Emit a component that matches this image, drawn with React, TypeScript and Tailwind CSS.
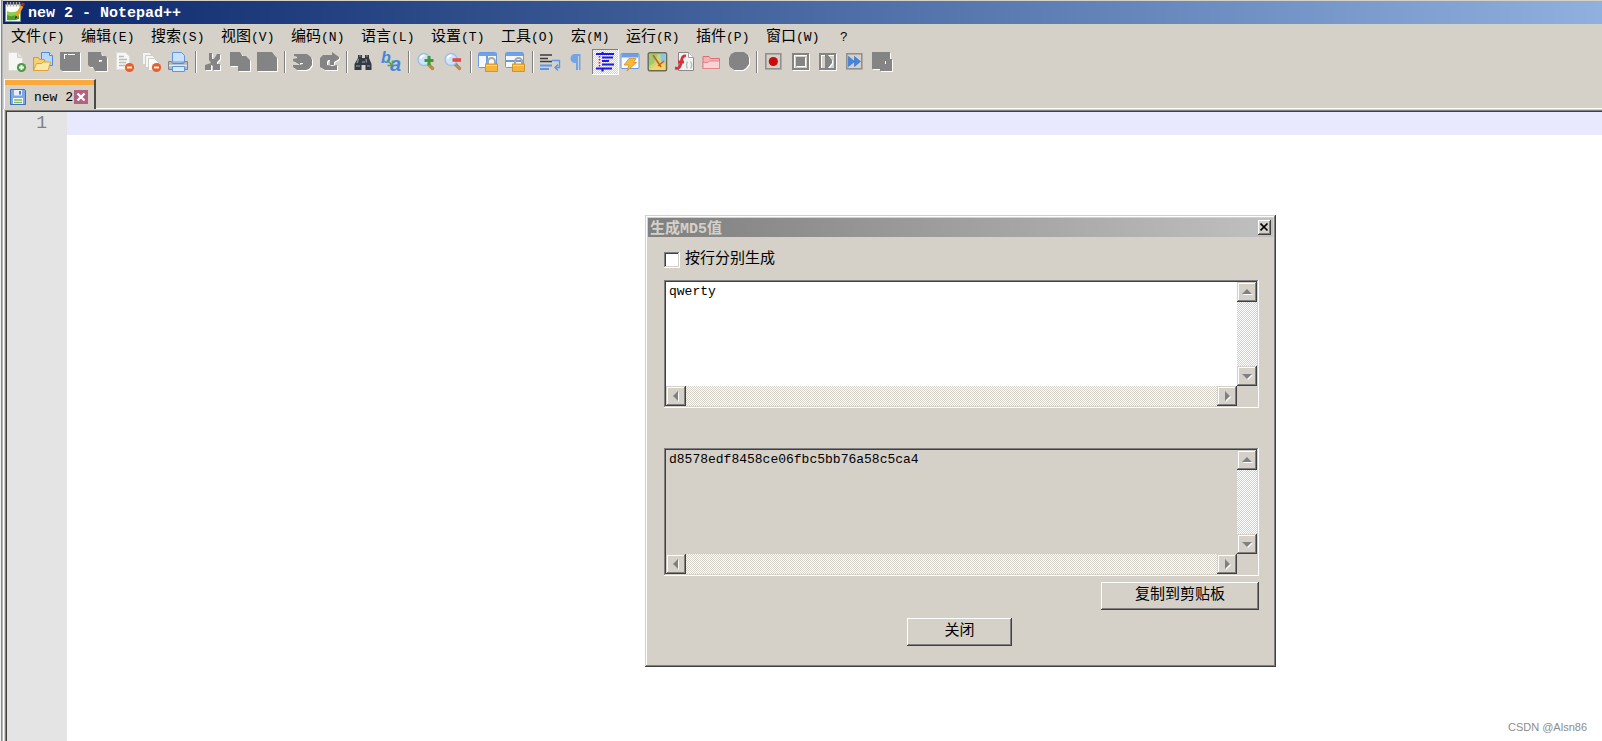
import { useState, type ReactNode } from "react";

const RAISED =
  "shadow-[inset_-1px_-1px_#404040,inset_1px_1px_#d5d1c8,inset_-2px_-2px_#808080,inset_2px_2px_#ffffff]";
const RAISED_BUTTON =
  "shadow-[inset_-1px_-1px_#404040,inset_1px_1px_#ffffff,inset_-2px_-2px_#808080]";
const SUNKEN =
  "shadow-[inset_-1px_-1px_#ffffff,inset_1px_1px_#808080,inset_-2px_-2px_#d5d1c8,inset_2px_2px_#404040]";
const CHECKER =
  "bg-[repeating-conic-gradient(#ffffff_0_25%,#d5d1c8_0_50%)] bg-[length:2px_2px]";
const MONO = "font-['Liberation_Mono','Noto_Sans_CJK_SC',monospace]";

const menus = [
  { name: "文件", key: "F", width: "w-[70px]" },
  { name: "编辑", key: "E", width: "w-[70px]" },
  { name: "搜索", key: "S", width: "w-[70px]" },
  { name: "视图", key: "V", width: "w-[70px]" },
  { name: "编码", key: "N", width: "w-[70px]" },
  { name: "语言", key: "L", width: "w-[70px]" },
  { name: "设置", key: "T", width: "w-[70px]" },
  { name: "工具", key: "O", width: "w-[70px]" },
  { name: "宏", key: "M", width: "w-[55px]" },
  { name: "运行", key: "R", width: "w-[70px]" },
  { name: "插件", key: "P", width: "w-[70px]" },
  { name: "窗口", key: "W", width: "w-[70px]" },
];

function Svg({ children }: { children: ReactNode }) {
  return (
    <svg viewBox="0 0 20 20" className="block h-5 w-5 shrink-0 overflow-visible" aria-hidden="true">
      {children}
    </svg>
  );
}

// 禁用状态：灰色剪影加右下白边
function Disabled({ d }: { d: string }) {
  return (
    <Svg>
      <path d={d} fill="#fff" fillRule="evenodd" transform="translate(1 1)" />
      <path d={d} fill="#848484" fillRule="evenodd" />
    </Svg>
  );
}

function Badge({ color, plus }: { color: string; plus?: boolean }) {
  return (
    <>
      <circle cx="14.500" cy="15.500" r="4.600" fill={color} />
      <path d={plus ? "M12 15.500h5M14.500 13v5" : "M12 15.500h5"} stroke="#fff" strokeWidth="1.800" />
    </>
  );
}

function FloppyIcon() {
  return (
    <svg viewBox="0 0 16 16" className="block h-4 w-4 shrink-0" aria-hidden="true">
      <path d="M.5.500h14l1 1v14h-15z" fill="#7aa9e8" stroke="#3f6fbd" />
      <path d="M4 1h8v5.500H4z" fill="#e6effa" />
      <path d="M9 2h2v3.500H9z" fill="#4a7cc4" />
      <path d="M3 9h10v6H3z" fill="#fff" />
      <path d="M4 11h8M4 13.500h8" stroke="#79b86a" strokeWidth="1.400" />
    </svg>
  );
}

function WindowLock({ split }: { split: "v" | "h" }) {
  return (
    <Svg>
      <rect x="-.5" y=".5" width="18" height="15" rx="1" fill="#f4f8fd" stroke="#6a9be0" />
      <path d="M0 1h17v3H0z" fill="#6ea2ea" />
      <path d={split === "v" ? "M8 4v11" : "M0 9h17"} stroke="#6a9be0" strokeWidth="2" />
      <path d="M9 12v-2.500a3.500 3.500 0 0 1 7 0V12" fill="none" stroke="#aaa79e" strokeWidth="2" />
      <rect x="6.500" y="12" width="12" height="7.500" fill="#f5b53c" stroke="#c98c20" strokeWidth=".8" />
      <path d="M7 13.500h11" stroke="#fbd98a" />
    </Svg>
  );
}

function Magnifier({ plus }: { plus?: boolean }) {
  return (
    <Svg>
      <path d="m11 12 4.500 4.500" stroke="#b98a4e" strokeWidth="3.400" strokeLinecap="round" />
      <path d="m11 11 2 2" stroke="#8b8b8b" strokeWidth="2" />
      <circle cx="7" cy="7.500" r="6" fill="#cfe3f8" stroke="#9dbfe6" strokeWidth="1.400" />
      <path d="M3.500 6.500a4 4 0 0 1 4-3" stroke="#fff" strokeWidth="2" fill="none" />
      {plus ? (
        <path d="M7.500 8.500h9M12 4v9" stroke="#3f9a35" strokeWidth="3" />
      ) : (
        <path d="M8.500 8h8.500" stroke="#e14b4b" strokeWidth="3.600" />
      )}
    </Svg>
  );
}

function MacroFrame({ children }: { children: ReactNode }) {
  return (
    <Svg>
      <rect x=".8" y="1.800" width="15" height="15" fill="#d5d1c8" stroke="#8f8f8f" strokeWidth="1.600" />
      {children}
    </Svg>
  );
}

type Tool = { label: string; icon: ReactNode; pressed?: boolean };

const toolGroups: Tool[][] = [
  [
    {
      label: "新建",
      icon: (
        <Svg>
          <path d="M1.500.500h9l5 5v13h-14z" fill="#f6f6f4" stroke="#dedcd8" />
          <path d="M10.500.500v5h5" fill="#e6e4e0" stroke="#d0cec8" />
          <Badge color="#4f9a48" plus />
        </Svg>
      ),
    },
    {
      label: "打开",
      icon: (
        <Svg>
          <path d="M7.500.500h8l3 3v10h-11z" fill="#b9d7f7" stroke="#4d8be0" />
          <path d="M15.500.500v3h3" fill="#e8f2fd" stroke="#4d8be0" />
          <path d="M-.5 18.500V5.500h5l1 2h5v11z" fill="#f7cf6c" stroke="#d79a2b" />
          <path d="M-.5 18.500l3-7h5l2-1.500h7l-2.500 8.500z" fill="#fbe7a6" stroke="#dba338" />
        </Svg>
      ),
    },
    {
      label: "保存",
      icon: <Disabled d="M-1 0H19V19H1L-1 17ZM3 2V7H4V3H6V2ZM7 2V3H14V2Z" />,
    },
    {
      label: "全部保存",
      icon: <Disabled d="M0 0H13L14 4H18L19 6V19H7L5 15H2L0 13ZM11 8V10H14V8Z" />,
    },
    {
      label: "关闭",
      icon: (
        <Svg>
          <path d="M1.500.500h9l4 4v13h-13z" fill="#f6f6f4" stroke="#dedcd8" />
          <path d="M4 4.500h5M4 7.500h8M4 10.500h7M4 13.500h6" stroke="#bdbbb6" strokeWidth="1.400" />
          <Badge color="#e2622a" />
        </Svg>
      ),
    },
    {
      label: "全部关闭",
      icon: (
        <Svg>
          <path d="M.5.500h7l3 3v9H.5z" fill="#f4f4f2" stroke="#cfcdc8" />
          <path d="M3.500 3.500h7l3 3v9h-10z" fill="#f6f6f4" stroke="#cfcdc8" />
          <path d="M6.500 6.500h6l4 4v8h-10z" fill="#fafaf9" stroke="#cfcdc8" />
          <Badge color="#e2622a" />
        </Svg>
      ),
    },
    {
      label: "打印",
      icon: (
        <Svg>
          <path d="M3.500 10V.500h9l3 3V10z" fill="#c9e1fa" stroke="#5c97e4" />
          <path d="M-.5 9.500h3l1 2h11l1-2h3v8h-19z" fill="#b3b6bd" stroke="#80848c" />
          <path d="M0 13.500h18" stroke="#e4e6ea" strokeWidth="1.500" />
          <path d="M3.500 14.500h12v5h-12z" fill="#d9eafc" stroke="#5c97e4" />
        </Svg>
      ),
    },
  ],
  [
    {
      label: "剪切",
      icon: <Disabled d="M5 1H8V7H10L13 2H16V7L13 10V12H16V18H9V14L7 13V18H1V13L4 12L7 11L5 8Z" />,
    },
    {
      label: "复制",
      icon: <Disabled d="M-1 0H9L11 3V4H15L19 8V19H7V14H-1Z" />,
    },
    {
      label: "粘贴",
      icon: <Disabled d="M-1 0H14L19 6V19H-1Z" />,
    },
  ],
  [
    {
      label: "撤销",
      icon: <Disabled d="M1 2H14L18 5L19 8V13L16 17L13 18H4L0 15V13H6L10 12V11H7V13L0 9V7L4 6V5L1 4Z" />,
    },
    {
      label: "重做",
      icon: <Disabled d="M12 0L19 5V7L14 10V13H10V8H8L7 10V13L12 14L17 13V18H5L0 15V6L3 3H12Z" />,
    },
  ],
  [
    {
      label: "查找",
      icon: (
        <Svg>
          <path d="M3 6V3h4v3h3V3h4v3l2.500 6v6h-6v-5h-4v5h-7v-6z" fill="#343a44" />
          <path d="M4 4h2M11 4h2M2 11l1.500-4M11.500 10.500l-.5-3.500" stroke="#8d98a8" strokeWidth="1.200" />
          <path d="M1 14h4M12 14h3" stroke="#76808e" strokeWidth="1.600" />
          <path d="M7 10h3" stroke="#9aa2ac" />
        </Svg>
      ),
    },
    {
      label: "替换",
      icon: (
        <Svg>
          <text x="-1" y="11" fontSize="16" fontWeight="700" fontStyle="italic" fontFamily="Liberation Sans, sans-serif" fill="#4386dc">b</text>
          <text x="8" y="19" fontSize="20" fontWeight="700" fontStyle="italic" fontFamily="Liberation Sans, sans-serif" fill="#4386dc">a</text>
          <path d="M5 8l5 5M10.500 8.500V13.500H5.500" fill="none" stroke="#55a05a" strokeWidth="1.600" />
        </Svg>
      ),
    },
  ],
  [
    { label: "放大", icon: <Magnifier plus /> },
    { label: "缩小", icon: <Magnifier /> },
  ],
  [
    { label: "垂直同步滚动", icon: <WindowLock split="v" /> },
    { label: "水平同步滚动", icon: <WindowLock split="h" /> },
  ],
  [
    {
      label: "自动换行",
      icon: (
        <Svg>
          <path d="M-1 3h12M-1 6.500h8M-1 9.500h12" stroke="#3d3d3d" strokeWidth="1.600" />
          <path d="M-1 13.500h12M-1 17h9" stroke="#5d96e6" strokeWidth="1.800" />
          <path d="M11 8.500h7.500v7H15M17 12.500l-3 3 3 3" fill="none" stroke="#5d96e6" strokeWidth="1.400" />
        </Svg>
      ),
    },
    {
      label: "显示所有字符",
      icon: (
        <Svg>
          <path d="M12.500 2H7a4.500 4.500 0 0 0 0 9h1v7h2V4h1v14h1.500z" fill="#6ea6ee" />
        </Svg>
      ),
    },
    {
      label: "显示缩进参考线",
      pressed: true,
      icon: (
        <Svg>
          <path d="M0 2h18M6 5.500h11M6 9h7M6 12.500h12M0 16.500h16M6.500 16v3.500M6.500 0v3" stroke="#1a1af0" strokeWidth="2.200" />
          <path d="M3.500 4v11" stroke="#e02020" strokeWidth="1.600" strokeDasharray="1.500 1.500" />
        </Svg>
      ),
    },
    {
      label: "用户自定义语言",
      icon: (
        <Svg>
          <rect x="-1" y="1.500" width="18" height="15" rx="1" fill="#f6f9fd" stroke="#6a97d8" />
          <path d="M-.5 2h17v3.500h-17z" fill="#6c9fe8" />
          <path d="M7 6.500h7l-2.500 4h3L5 19l2-6H2z" fill="#f7b93c" stroke="#d68f1f" strokeWidth=".8" />
        </Svg>
      ),
    },
    {
      label: "文档结构图",
      icon: (
        <Svg>
          <rect x="-.8" y=".8" width="18.400" height="18" rx="1.500" fill="#c8d878" stroke="#6b6a58" strokeWidth="1.400" />
          <path d="M0 2h9l-4 9-5 3z" fill="#9ecb6e" />
          <path d="M11 2h5v8l-4-1z" fill="#8fc3e4" />
          <path d="M0 18l9-7 7 2v5z" fill="#f1d862" />
          <path d="M4 3l8 12M15 9l-6 5" stroke="#d8552e" strokeWidth="1.600" />
        </Svg>
      ),
    },
    {
      label: "函数列表",
      icon: (
        <Svg>
          <path d="M2.500.500h10l5 5v13h-15z" fill="#f3f3f3" stroke="#8a8a8a" />
          <path d="M12.500.500v5h5" fill="#fff" stroke="#a0a0a0" />
          <path d="M10 4C5 3 6 9 4.500 13S2 16.500-1 16M2 10h6" fill="none" stroke="#d6303a" strokeWidth="2.800" />
          <path d="M11.500 9.500q-2 4 0 7M14.500 9.500q2.500 4 0 7" fill="none" stroke="#b9bcb4" strokeWidth="1.400" />
        </Svg>
      ),
    },
    {
      label: "文件夹工作区",
      icon: (
        <Svg>
          <path d="M0 16.500v-12h6l1.500 2h9v10z" fill="#f2b3b7" stroke="#da6d76" />
          <path d="M0 16.500v-6h5l1.500-1.500h10v7.500z" fill="#f8d3d5" stroke="#e0868d" />
        </Svg>
      ),
    },
    {
      label: "监视文件",
      icon: <Disabled d="M5 0H14L18 3L19 6V12L16 16L13 18H4L0 15L-1 12V6L1 2Z" />,
    },
  ],
  [
    {
      label: "开始录制",
      icon: (
        <MacroFrame>
          <circle cx="8.300" cy="9.500" r="4.600" fill="#cc0a0a" />
        </MacroFrame>
      ),
    },
    {
      label: "停止录制",
      icon: <Disabled d="M0 1H17V18H0ZM2 3V16H15V3ZM4 5H13V14H4Z" />,
    },
    {
      label: "播放",
      icon: <Disabled d="M0 1H17V18H0ZM2 3V16H15V3ZM6 3H9L13 8V11L9 16H6Z" />,
    },
    {
      label: "重复播放",
      icon: (
        <MacroFrame>
          <path d="M2.500 4.500l6 5-6 5zM8.500 4.500l6 5-6 5z" fill="#3f86e6" stroke="#2c68c4" strokeWidth=".6" />
        </MacroFrame>
      ),
    },
    {
      label: "保存宏",
      icon: <Disabled d="M-1 0H17V7H19V19H7V17H-1ZM12 9V12H13V9Z" />,
    },
  ],
];

function TitleBar() {
  return (
    <header className="flex h-[23px] items-center gap-[3px] bg-gradient-to-r from-[#0b2569] to-[#90b1de] pl-[2px]">
      <svg viewBox="0 0 20 21" className="h-[21px] w-5 shrink-0" aria-hidden="true">
        <path d="M.5 2.500h15v17H.5z" fill="#fdfdfb" stroke="#8a8a86" />
        <path d="M2 9q6 3 12-1v8q-5 3-12 1z" fill="#8ccf4e" />
        <path d="M2 13q6 3 12-2v6q-5 2-12 1z" fill="#4e9e2c" />
        <path d="M2.500 0v4.500M5.500 0v4.500M8.500 0v4.500M11.500 0v4.500M14.500 0v4.500" stroke="#a6a6a4" strokeWidth="1.400" />
        <path d="M17 4 11 15" stroke="#e6a423" strokeWidth="3.200" />
        <path d="m10.500 13.500-.5 3.500 2.800-2z" fill="#3b3020" />
        <path d="m18.500 1-1.200 2.600" stroke="#b22a2a" strokeWidth="3.200" />
      </svg>
      <h1 className={`${MONO} pt-[2px] text-[15px] leading-5 font-bold text-white`}>new 2 - Notepad++</h1>
    </header>
  );
}

function MenuBar() {
  return (
    <nav className={`${MONO} flex h-6 items-center pt-1 pl-2 text-[15px] leading-5 text-black`}>
      {menus.map(({ name, key, width }) => (
        <button key={key} type="button" className={`${width} text-left whitespace-nowrap`}>
          {name}
          <span className="text-[13px]">({key})</span>
        </button>
      ))}
      <button type="button" className="w-4 text-center text-[13px]">?</button>
    </nav>
  );
}

function ToolBar() {
  return (
    <div role="toolbar" className="flex h-[31px] items-start pt-px pl-px">
      {toolGroups.map((group, index) => (
        <div key={group[0].label} className="flex">
          {index > 0 && (
            <div className="w-2 pt-[2px] pl-[2px]">
              <div className="h-[22px] w-[2px] border-r border-l border-r-white border-l-[#808080]" />
            </div>
          )}
          {group.map(({ label, icon, pressed }) => (
            <button
              key={label}
              type="button"
              title={label}
              aria-pressed={pressed}
              className={
                pressed
                  ? `flex h-[26px] w-[27px] items-start pt-[3px] pl-1 ${CHECKER} shadow-[inset_-1px_-1px_#ffffff,inset_1px_1px_#808080]`
                  : "flex h-[26px] w-[27px] items-start pt-[3px] pl-[3px]"
              }
            >
              {icon}
            </button>
          ))}
        </div>
      ))}
    </div>
  );
}

function TabBar() {
  return (
    <div className="flex h-[30px] pl-px">
      <div className="w-[92px] border-t border-r-2 border-l border-t-[#f4f2ee] border-r-[#4a4a4a] border-l-white">
        <div className="h-[5px] bg-[#faa93a]" />
        <div className="flex h-6 items-center pl-[5px]">
          <FloppyIcon />
          <span className={`${MONO} ml-2 w-10 pt-[2px] text-[13px] leading-5 text-black`}>new 2</span>
          <button type="button" aria-label="关闭标签" className="flex h-[14px] w-[14px] items-center justify-center bg-[#b3627c]">
            <svg viewBox="0 0 10 10" className="h-[10px] w-[10px]" aria-hidden="true">
              <path d="m1.500 1.500 7 7M8.500 1.500l-7 7" stroke="#fff" strokeWidth="2.400" />
            </svg>
          </button>
        </div>
      </div>
      <div className="flex-1 border-b border-white" />
    </div>
  );
}

const arrows = {
  up: "M0 7h10L5 2z",
  down: "M0 3h10L5 8z",
  left: "M7 0v10L2 5z",
  right: "M3 0v10l5-5z",
};

function ScrollButton({ dir, label }: { dir: keyof typeof arrows; label: string }) {
  return (
    <button
      type="button"
      aria-label={label}
      className={`flex h-5 w-5 shrink-0 items-center justify-center bg-[#d5d1c8] ${RAISED}`}
    >
      <svg viewBox="0 0 10 10" className="h-[10px] w-[10px] overflow-visible" aria-hidden="true">
        <path d={arrows[dir]} fill="#fff" transform="translate(1 1)" />
        <path d={arrows[dir]} fill="#808080" />
      </svg>
    </button>
  );
}

type ScrollBoxProps = {
  label: string;
  value: string;
  onChange?: (value: string) => void;
};

function ScrollBox({ label, value, onChange }: ScrollBoxProps) {
  return (
    <div className={`grid grid-cols-[1fr_20px] grid-rows-[104px_20px] p-[2px] ${SUNKEN}`}>
      <textarea
        aria-label={label}
        value={value}
        readOnly={!onChange}
        onChange={(e) => onChange?.(e.target.value)}
        className={`${MONO} block h-full w-full resize-none overflow-hidden pt-[2px] pl-[3px] text-[13px] leading-4 text-black outline-none ${
          onChange ? "bg-white" : "bg-[#d5d1c8]"
        }`}
      />
      <div className={`flex flex-col justify-between ${CHECKER}`}>
        <ScrollButton dir="up" label="向上滚动" />
        <ScrollButton dir="down" label="向下滚动" />
      </div>
      <div className={`flex justify-between ${CHECKER}`}>
        <ScrollButton dir="left" label="向左滚动" />
        <ScrollButton dir="right" label="向右滚动" />
      </div>
    </div>
  );
}

function Md5Dialog() {
  const [text, setText] = useState("qwerty");
  const [byLine, setByLine] = useState(false);

  return (
    <section
      role="dialog"
      aria-labelledby="md5-title"
      className={`absolute top-[215px] left-[645px] w-[631px] bg-[#d5d1c8] p-[3px] ${RAISED}`}
    >
      <div className="flex h-[19px] items-center justify-between bg-gradient-to-r from-[#808080] to-[#c0c0c0] pr-[2px] pl-[2px]">
        <h2 id="md5-title" className={`${MONO} pt-1 text-[15px] leading-5 font-bold text-[#d5d1c8]`}>
          生成MD5值
        </h2>
        <button
          type="button"
          aria-label="关闭窗口"
          className={`flex h-[15px] w-[13px] items-center justify-center bg-[#d5d1c8] ${RAISED_BUTTON}`}
        >
          <svg viewBox="0 0 9 9" className="h-[9px] w-[9px]" aria-hidden="true">
            <path d="m.5.500 7 7M7.500.500l-7 7" stroke="#000" strokeWidth="1.600" />
          </svg>
        </button>
      </div>

      <div className="flex flex-col pt-[13px] pr-[14px] pb-[18px] pl-4 text-[15px] text-black">
        <label className={`${MONO} flex h-5 items-center gap-[5px] leading-5`}>
          <input
            type="checkbox"
            checked={byLine}
            onChange={(e) => setByLine(e.target.checked)}
            className={`h-4 w-4 appearance-none bg-white checked:bg-[#404040] ${SUNKEN}`}
          />
          按行分别生成
        </label>
        <div className="mt-[10px]">
          <ScrollBox label="输入文本" value={text} onChange={setText} />
        </div>
        <div className="mt-10">
          <ScrollBox label="MD5 结果" value="d8578edf8458ce06fbc5bb76a58c5ca4" />
        </div>
        <button
          type="button"
          className={`${MONO} mt-[6px] h-7 w-[158px] self-end leading-6 ${RAISED_BUTTON}`}
        >
          复制到剪贴板
        </button>
        <button
          type="button"
          className={`${MONO} mt-2 mr-1 h-7 w-[105px] self-center leading-6 ${RAISED_BUTTON}`}
        >
          关闭
        </button>
      </div>
    </section>
  );
}

export default function App() {
  const [content, setContent] = useState("");

  return (
    <div className="relative flex min-h-screen overflow-hidden bg-[#d5d1c8]">
      <div className="w-[3px] shrink-0 border-r border-l border-r-[#b4b8bc] border-l-[#f2f2f0] bg-[#8c8c8c]" />
      <div className="flex min-w-0 flex-1 flex-col pt-px">
        <TitleBar />
        <MenuBar />
        <ToolBar />
        <TabBar />
        <div className="flex flex-1 flex-col border-l border-white pt-px pl-px">
          <main className="flex flex-1 pt-[2px] pl-[2px] shadow-[inset_1px_1px_#808080,inset_2px_2px_#404040]">
            <div className={`${MONO} w-[60px] bg-[#e4e4e4] pr-5 text-right text-[18px] leading-[23px] text-[#808080]`}>
              1
            </div>
            <textarea
              aria-label="编辑区"
              value={content}
              onChange={(e) => setContent(e.target.value)}
              className={`${MONO} flex-1 resize-none bg-[linear-gradient(#e8e8ff_23px,#ffffff_23px)] text-[18px] leading-[23px] outline-none`}
            />
          </main>
        </div>
      </div>
      <Md5Dialog />
      <p className="absolute right-[15px] bottom-[6px] font-['Liberation_Sans',sans-serif] text-[11px] leading-4 text-[#8c8c8c]">
        CSDN @Alsn86
      </p>
    </div>
  );
}
